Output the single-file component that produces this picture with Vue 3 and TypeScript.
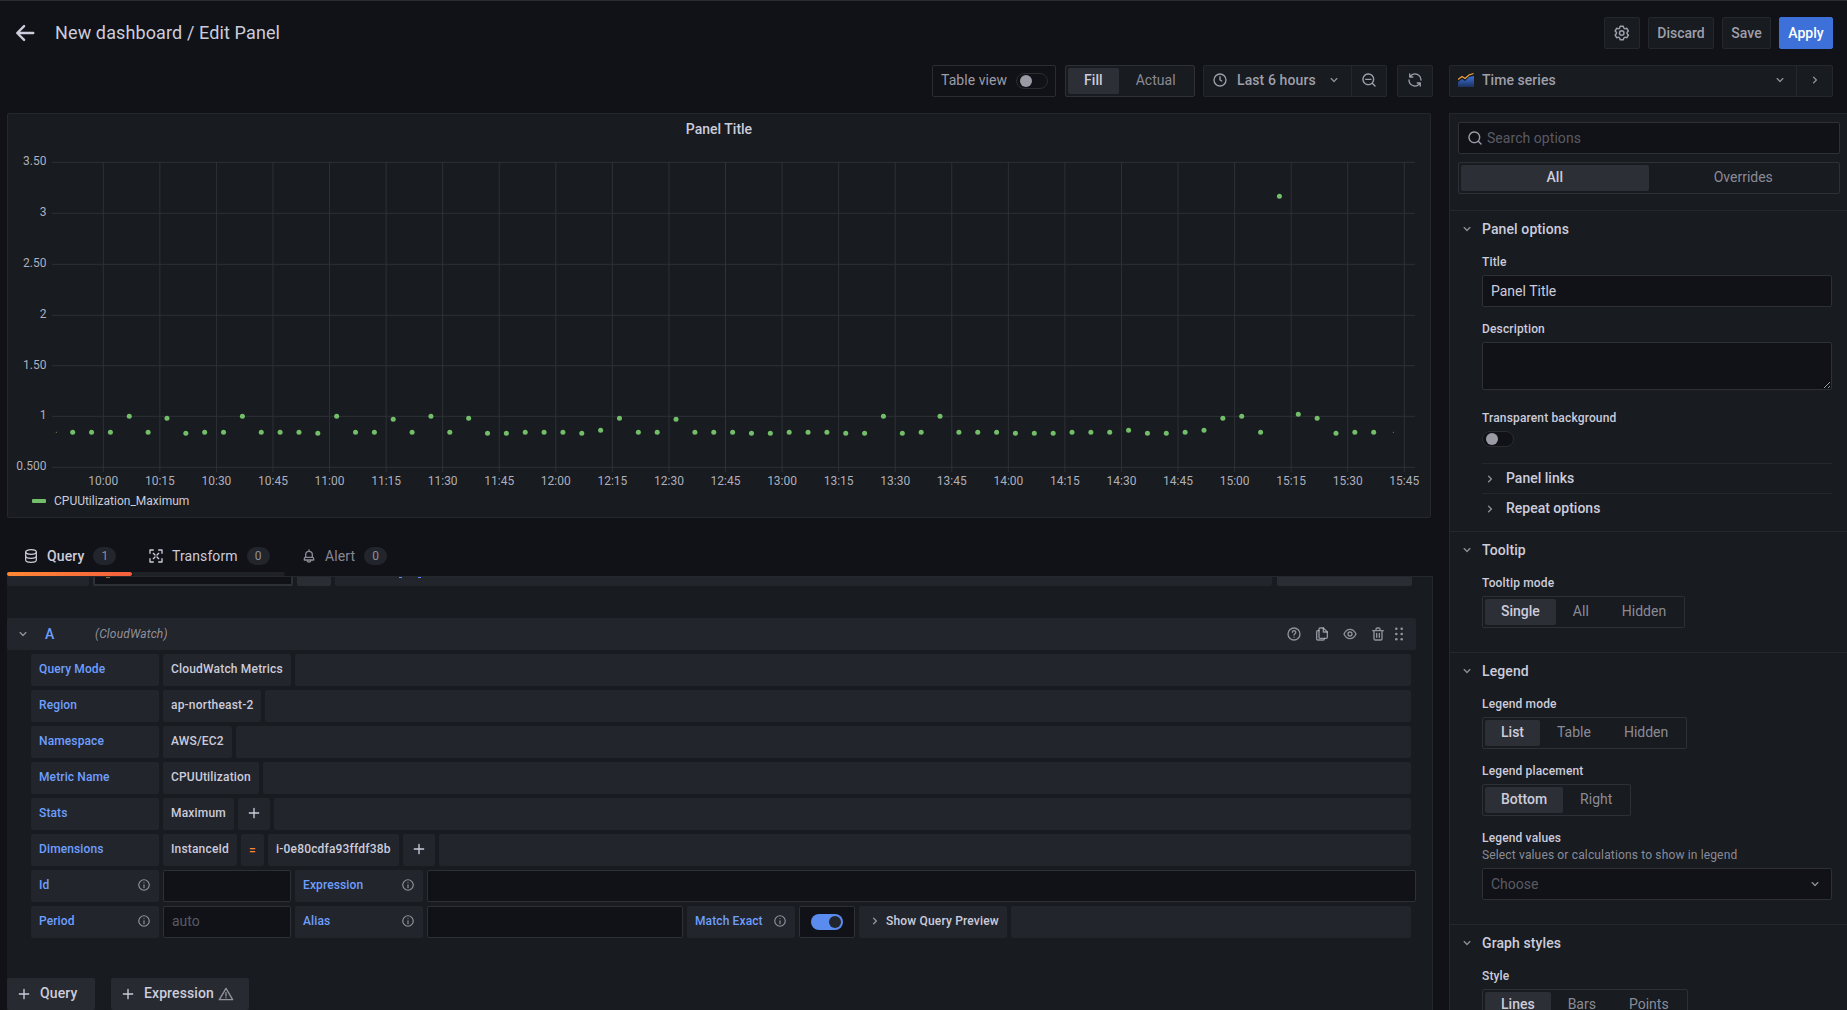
<script setup lang="ts">
const icons: Record<string, string> = {
  cog: 'M19.9,12.66a1,1,0,0,1,0-1.32L21.18,9.9a1,1,0,0,0,.12-1.17l-2-3.46a1,1,0,0,0-1.07-.48l-1.88.38a1,1,0,0,1-1.15-.66l-.61-1.83A1,1,0,0,0,13.64,2h-4a1,1,0,0,0-1,.68L8.08,4.51a1,1,0,0,1-1.15.66L5,4.79A1,1,0,0,0,4,5.27L2,8.73A1,1,0,0,0,2.1,9.9l1.27,1.44a1,1,0,0,1,0,1.32L2.1,14.1A1,1,0,0,0,2,15.27l2,3.46a1,1,0,0,0,1.07.48l1.88-.38a1,1,0,0,1,1.15.66l.61,1.83a1,1,0,0,0,1,.68h4a1,1,0,0,0,.95-.68l.61-1.83a1,1,0,0,1,1.15-.66l1.88.38a1,1,0,0,0,1.07-.48l2-3.46a1,1,0,0,0-.12-1.17ZM18.41,14l.8.9-1.28,2.22-1.18-.24a3,3,0,0,0-3.45,2L12.92,20H10.36L10,18.86a3,3,0,0,0-3.45-2l-1.18.24L4.07,14.89l.8-.9a3,3,0,0,0,0-4l-.8-.9L5.35,6.89l1.18.24a3,3,0,0,0,3.45-2L10.36,4h2.56l.38,1.14a3,3,0,0,0,3.45,2l1.18-.24,1.28,2.22-.8.9A3,3,0,0,0,18.41,14ZM11.64,8a4,4,0,1,0,4,4A4,4,0,0,0,11.64,8Zm0,6a2,2,0,1,1,2-2A2,2,0,0,1,11.64,14Z',
  clock: 'M15.09814,12.63379,13,11.42285V7a1,1,0,0,0-2,0v5a1.00025,1.00025,0,0,0,.5.86621l2.59814,1.5a1.00016,1.00016,0,1,0,1-1.73242ZM12,2A10,10,0,1,0,22,12,10.01146,10.01146,0,0,0,12,2Zm0,18a8,8,0,1,1,8-8A8.00917,8.00917,0,0,1,12,20Z',
  zoomOut: 'M21.71,20.29,18,16.61A9,9,0,1,0,16.61,18l3.68,3.68a1,1,0,0,0,1.42,0A1,1,0,0,0,21.71,20.29ZM11,18a7,7,0,1,1,7-7A7,7,0,0,1,11,18Zm4-8H7a1,1,0,0,0,0,2h8a1,1,0,0,0,0-2Z',
  search: 'M21.71,20.29,18,16.61A9,9,0,1,0,16.61,18l3.68,3.68a1,1,0,0,0,1.42,0A1,1,0,0,0,21.71,20.29ZM11,18a7,7,0,1,1,7-7A7,7,0,0,1,11,18Z',
  sync: 'M19.91,15.51H15.38a1,1,0,0,0,0,2h2.4A8,8,0,0,1,4,12a1,1,0,0,0-2,0,10,10,0,0,0,16.88,7.23V21a1,1,0,0,0,2,0V16.5A1,1,0,0,0,19.91,15.51ZM12,2A10,10,0,0,0,5.12,4.77V3a1,1,0,0,0-2,0V7.5a1,1,0,0,0,1,1h4.5a1,1,0,0,0,0-2H6.22A8,8,0,0,1,20,12a1,1,0,0,0,2,0A10,10,0,0,0,12,2Z',
  down: 'M17,9.17a1,1,0,0,0-1.41,0L12,12.71,8.46,9.17a1,1,0,0,0-1.41,0,1,1,0,0,0,0,1.42l4.24,4.24a1,1,0,0,0,1.42,0L17,10.59A1,1,0,0,0,17,9.17Z',
  right: 'M14.83,11.29,10.59,7.05a1,1,0,0,0-1.42,0,1,1,0,0,0,0,1.41L12.71,12,9.17,15.54a1,1,0,0,0,0,1.41,1,1,0,0,0,.71.29,1,1,0,0,0,.71-.29l4.24-4.24A1,1,0,0,0,14.83,11.29Z',
  bell: 'M18,13.18V10a6,6,0,0,0-5-5.91V3a1,1,0,0,0-2,0V4.09A6,6,0,0,0,6,10v3.18A3,3,0,0,0,4,16v2a1,1,0,0,0,1,1H8.14a4,4,0,0,0,7.72,0H19a1,1,0,0,0,1-1V16A3,3,0,0,0,18,13.18ZM8,10a4,4,0,0,1,8,0v3H8Zm4,10a2,2,0,0,1-1.72-1h3.44A2,2,0,0,1,12,20Zm6-3H6V16a1,1,0,0,1,1-1H17a1,1,0,0,1,1,1Z',
  plus: 'M19,11H13V5a1,1,0,0,0-2,0v6H5a1,1,0,0,0,0,2h6v6a1,1,0,0,0,2,0V13h6a1,1,0,0,0,0-2Z',
  eye: 'M21.92,11.6C19.9,6.91,16.1,4,12,4S4.1,6.91,2.08,11.6a1,1,0,0,0,0,.8C4.1,17.09,7.9,20,12,20s7.9-2.91,9.92-7.6A1,1,0,0,0,21.92,11.6ZM12,18c-3.17,0-6.17-2.29-7.9-6C5.83,8.29,8.83,6,12,6s6.17,2.29,7.9,6C18.17,15.71,15.17,18,12,18ZM12,8a4,4,0,1,0,4,4A4,4,0,0,0,12,8Zm0,6a2,2,0,1,1,2-2A2,2,0,0,1,12,14Z',
  trash: 'M10,18a1,1,0,0,0,1-1V11a1,1,0,0,0-2,0v6A1,1,0,0,0,10,18ZM20,6H16V5a3,3,0,0,0-3-3H11A3,3,0,0,0,8,5V6H4A1,1,0,0,0,4,8H5V19a3,3,0,0,0,3,3h8a3,3,0,0,0,3-3V8h1a1,1,0,0,0,0-2ZM10,5a1,1,0,0,1,1-1h2a1,1,0,0,1,1,1V6H10Zm7,14a1,1,0,0,1-1,1H8a1,1,0,0,1-1-1V8H17Zm-3-1a1,1,0,0,0,1-1V11a1,1,0,0,0-2,0v6A1,1,0,0,0,14,18Z',
}

const levels: Record<string, number> = { a: 432.3, b: 433.3, c: 430.3, T: 416.3, U: 418.3, V: 419.3, S: 414.3, H: 196.3 }
const dotCodes = 'aaaTaUbaaTaaabTaaVaTaUb' + 'baaabcUaaVaaabbaaabbTbaTaaab' + 'bbaaacbbacUTaHSUbaa'
const dots = dotCodes.split('').map((c, i) => ({ x: 72.7 + 18.855 * i, y: levels[c] }))

const yTicks = [
  { label: '3.50', y: 162.3 },
  { label: '3', y: 213.3 },
  { label: '2.50', y: 264.3 },
  { label: '2', y: 315.3 },
  { label: '1.50', y: 365.8 },
  { label: '1', y: 416.3 },
  { label: '0.500', y: 467.3 },
]
const xTicks = Array.from({ length: 24 }, (_, i) => {
  const mins = 600 + i * 15
  const h = Math.floor(mins / 60)
  const m = mins % 60
  return { x: 103.3 + 56.565 * i, label: `${h}:${m === 0 ? '00' : m}` }
})

interface Seg { t: string; kind?: 'plus' | 'op' }
const rows: { label: string; segs: Seg[] }[] = [
  { label: 'Query Mode', segs: [{ t: 'CloudWatch Metrics' }] },
  { label: 'Region', segs: [{ t: 'ap-northeast-2' }] },
  { label: 'Namespace', segs: [{ t: 'AWS/EC2' }] },
  { label: 'Metric Name', segs: [{ t: 'CPUUtilization' }] },
  { label: 'Stats', segs: [{ t: 'Maximum' }, { t: '', kind: 'plus' }] },
  { label: 'Dimensions', segs: [{ t: 'InstanceId' }, { t: '=', kind: 'op' }, { t: 'i-0e80cdfa93ffdf38b' }, { t: '', kind: 'plus' }] },
]
</script>

<template>
  <div class="app">
    <header class="topbar">
      <svg class="back" viewBox="0 0 24 24"><path d="M21 12H4M11 4.5L3.5 12l7.5 7.5" /></svg>
      <div class="title">New dashboard / Edit Panel</div>
      <div class="top-actions">
        <button class="btn icon-btn"><svg class="ic" viewBox="0 0 24 24"><path :d="icons.cog" /></svg></button>
        <button class="btn w-discard">Discard</button>
        <button class="btn w-save">Save</button>
        <button class="btn primary w-apply">Apply</button>
      </div>
    </header>

    <div class="toolbar">
      <div class="box tableview">
        <span class="lift">Table view</span>
        <span class="switch"><i class="knob"></i></span>
      </div>
      <div class="radio fillradio">
        <span class="opt on">Fill</span>
        <span class="opt">Actual</span>
      </div>
      <div class="box picker">
        <div class="range">
          <svg class="ic lift" viewBox="0 0 24 24"><path :d="icons.clock" /></svg>
          <span class="lift">Last 6 hours</span>
          <svg class="ic ic-chev lift" viewBox="0 0 24 24"><path :d="icons.down" /></svg>
        </div>
        <div class="zoom"><svg class="ic lift" viewBox="0 0 24 24"><path :d="icons.zoomOut" /></svg></div>
      </div>
      <div class="box refresh"><svg class="ic lift" viewBox="0 0 24 24"><path :d="icons.sync" /></svg></div>
      <div class="box viz">
        <div class="viz-main">
          <svg class="viz-ic lift" viewBox="0 0 16 14">
            <defs>
              <linearGradient id="vizfill" x1="0" y1="0" x2="0" y2="1">
                <stop offset="0" stop-color="#3d71d9" />
                <stop offset="1" stop-color="#1d3260" />
              </linearGradient>
            </defs>
            <path d="M0 9L4 6l3 2 4-4 5-1v11H0z" fill="url(#vizfill)" />
            <path d="M0 6.5L4 3.5l3 2 4-3.5 4.5-1.5" fill="none" stroke="#f2a43a" stroke-width="1.2" />
          </svg>
          <span class="lift">Time series</span>
          <svg class="ic ic-chev push lift" viewBox="0 0 24 24"><path :d="icons.down" /></svg>
        </div>
        <div class="viz-next"><svg class="ic lift" viewBox="0 0 24 24"><path :d="icons.right" /></svg></div>
      </div>
    </div>

    <div class="content">
      <div class="left">
        <section class="panel">
          <svg class="chart" viewBox="8 114 1422 403" width="1422" height="403">
            <text class="ptitle" x="719" y="134" text-anchor="middle">Panel Title</text>
            <line v-for="t in yTicks" :key="t.label" class="grid" x1="52" x2="1415" :y1="t.y" :y2="t.y" />
            <line v-for="t in xTicks" :key="t.label" class="grid" :x1="t.x" :x2="t.x" y1="162" y2="472" />
            <text v-for="t in yTicks" :key="'y' + t.label" class="tick" x="46.5" :y="t.y + 3" text-anchor="end">{{ t.label }}</text>
            <text v-for="t in xTicks" :key="'x' + t.label" class="tick" :x="t.x" y="484.5" text-anchor="middle">{{ t.label }}</text>
            <circle cx="56.3" cy="432.3" r="0.5" class="dot" />
            <circle v-for="(d, i) in dots" :key="i" :cx="d.x" :cy="d.y" r="2.5" class="dot" />
            <circle cx="1393.3" cy="432.3" r="0.5" class="dot" />
            <rect x="32" y="499" width="14" height="4" rx="1" class="dot" />
            <text class="legend" x="54" y="504.5">CPUUtilization_Maximum</text>
          </svg>
        </section>

        <nav class="tabs">
          <div class="tab active">
            <svg class="ic tab-ic" viewBox="0 0 24 24">
              <g class="st thin">
                <ellipse cx="12" cy="6" rx="8" ry="3.500" />
                <path d="M4 6v12c0 1.900 3.600 3.500 8 3.500s8-1.600 8-3.500V6" />
                <path d="M4 12c0 1.900 3.600 3.500 8 3.500s8-1.600 8-3.500" />
              </g>
            </svg>
            <span>Query</span><span class="badge">1</span>
          </div>
          <div class="tab second">
            <svg class="ic tab-ic" viewBox="0 0 24 24">
              <g class="st">
                <path d="M3 8V3h5M16 3h5v5M21 16v5h-5M8 21H3v-5" />
                <path d="M8 8l2.500 2.500M16 8l-2.500 2.500M16 16l-2.500-2.500M8 16l2.500-2.500" />
              </g>
            </svg>
            <span>Transform</span><span class="badge">0</span>
          </div>
          <div class="tab third">
            <svg class="ic tab-ic" viewBox="0 0 24 24"><path :d="icons.bell" /></svg>
            <span>Alert</span><span class="badge">0</span>
          </div>
        </nav>

        <div class="query">
          <div class="stub">
            <div class="s1"></div>
            <div class="s2"><i class="speck orange"></i></div>
            <div class="s3"></div>
            <div class="s4"><i class="speck blue b1"></i><i class="speck blue b2"></i></div>
            <div class="s5"></div>
          </div>

          <div class="qhead">
            <svg class="ic ic-chev" viewBox="0 0 24 24"><path :d="icons.down" /></svg>
            <span class="qa">A</span>
            <span class="qds">(CloudWatch)</span>
            <div class="qicons">
              <svg class="ic" viewBox="0 0 24 24"><g class="st"><circle cx="12" cy="12" r="9" /><path d="M9.600 9.500a2.500 2.500 0 1 1 3.800 2.100c-.9.600-1.400 1-1.400 2" /><path d="M12 16.700v.1" /></g></svg>
              <svg class="ic" viewBox="0 0 24 24"><g class="st"><path d="M9 3h5l6 6v8a1.500 1.500 0 0 1-1.500 1.500H9A1.500 1.500 0 0 1 7.500 17V4.500A1.500 1.500 0 0 1 9 3z" /><path d="M14 3v6h6" /><path d="M7.500 7H5.500A1.500 1.500 0 0 0 4 8.500v11A1.500 1.500 0 0 0 5.500 21H14a1.500 1.500 0 0 0 1.500-1.500v-1" /></g></svg>
              <svg class="ic" viewBox="0 0 24 24"><path :d="icons.eye" /></svg>
              <svg class="ic" viewBox="0 0 24 24"><path :d="icons.trash" /></svg>
              <svg class="ic grip" viewBox="0 0 16 16"><circle cx="5.300" cy="2.700" r="1.300" /><circle cx="10.700" cy="2.700" r="1.300" /><circle cx="5.300" cy="8" r="1.300" /><circle cx="10.700" cy="8" r="1.300" /><circle cx="5.300" cy="13.300" r="1.300" /><circle cx="10.700" cy="13.300" r="1.300" /></svg>
            </div>
          </div>

          <div v-for="r in rows" :key="r.label" class="qrow inset">
            <div class="qlabel"><span>{{ r.label }}</span></div>
            <template v-for="(s, i) in r.segs" :key="i">
              <div v-if="s.kind === 'plus'" class="seg plus"><svg class="ic" viewBox="0 0 24 24"><path :d="icons.plus" /></svg></div>
              <div v-else-if="s.kind === 'op'" class="seg op">{{ s.t }}</div>
              <div v-else class="seg">{{ s.t }}</div>
            </template>
            <div class="fill"></div>
          </div>

          <div class="qrow">
            <div class="qlabel"><span>Id</span><svg class="ic info" viewBox="0 0 24 24"><g class="st"><circle cx="12" cy="12" r="9" /><path d="M12 11.500v5M12 7.800v.1" /></g></svg></div>
            <div class="qinput"></div>
            <div class="qlabel"><span>Expression</span><svg class="ic info" viewBox="0 0 24 24"><g class="st"><circle cx="12" cy="12" r="9" /><path d="M12 11.500v5M12 7.800v.1" /></g></svg></div>
            <div class="qinput grow"></div>
          </div>

          <div class="qrow inset">
            <div class="qlabel"><span>Period</span><svg class="ic info" viewBox="0 0 24 24"><g class="st"><circle cx="12" cy="12" r="9" /><path d="M12 11.500v5M12 7.800v.1" /></g></svg></div>
            <div class="qinput ph">auto</div>
            <div class="qlabel"><span>Alias</span><svg class="ic info" viewBox="0 0 24 24"><g class="st"><circle cx="12" cy="12" r="9" /><path d="M12 11.500v5M12 7.800v.1" /></g></svg></div>
            <div class="qinput alias"></div>
            <div class="qlabel match"><span>Match Exact</span><svg class="ic info" viewBox="0 0 24 24"><g class="st"><circle cx="12" cy="12" r="9" /><path d="M12 11.500v5M12 7.800v.1" /></g></svg></div>
            <div class="qswitch"><span class="switch onsw"><i class="knob"></i></span></div>
            <div class="seg preview"><svg class="ic ic-chev" viewBox="0 0 24 24"><path :d="icons.right" /></svg>Show Query Preview</div>
            <div class="fill"></div>
          </div>

          <div class="adds">
            <button class="addbtn w-q"><svg class="ic" viewBox="0 0 24 24"><path :d="icons.plus" /></svg><span class="lift">Query</span></button>
            <button class="addbtn w-e">
              <svg class="ic" viewBox="0 0 24 24"><path :d="icons.plus" /></svg><span class="lift">Expression</span>
              <svg class="ic warn" viewBox="0 0 24 24"><g class="st"><path d="M12 3.500L22 20.500H2z" /><path d="M12 10v5M12 17.600v.1" /></g></svg>
            </button>
          </div>
        </div>
      </div>

      <aside class="pane">
        <div class="pane-top">
          <div class="search">
            <svg class="ic" viewBox="0 0 24 24"><path :d="icons.search" /></svg>
            <span>Search options</span>
          </div>
          <div class="radio full">
            <span class="opt on">All</span>
            <span class="opt">Overrides</span>
          </div>
        </div>

        <section class="sec">
          <div class="sec-head"><svg class="ic ic-chev" viewBox="0 0 24 24"><path :d="icons.down" /></svg>Panel options</div>
          <div class="sec-body short">
            <div class="field">
              <label class="lbl">Title</label>
              <div class="input">Panel Title</div>
            </div>
            <div class="field desc">
              <label class="lbl">Description</label>
              <textarea class="area" aria-label="Description"></textarea>
            </div>
            <div class="field sw">
              <label class="lbl">Transparent background</label>
              <span class="switch"><i class="knob"></i></span>
            </div>
            <div class="sub"><svg class="ic ic-chev" viewBox="0 0 24 24"><path :d="icons.right" /></svg><span class="lift">Panel links</span></div>
            <div class="sub"><svg class="ic ic-chev" viewBox="0 0 24 24"><path :d="icons.right" /></svg><span class="lift">Repeat options</span></div>
          </div>
        </section>

        <section class="sec">
          <div class="sec-head"><svg class="ic ic-chev" viewBox="0 0 24 24"><path :d="icons.down" /></svg>Tooltip</div>
          <div class="sec-body">
            <div class="field last">
              <label class="lbl">Tooltip mode</label>
              <div class="radio">
                <span class="opt on">Single</span><span class="opt">All</span><span class="opt">Hidden</span>
              </div>
            </div>
          </div>
        </section>

        <section class="sec">
          <div class="sec-head"><svg class="ic ic-chev" viewBox="0 0 24 24"><path :d="icons.down" /></svg>Legend</div>
          <div class="sec-body">
            <div class="field">
              <label class="lbl">Legend mode</label>
              <div class="radio">
                <span class="opt on">List</span><span class="opt">Table</span><span class="opt">Hidden</span>
              </div>
            </div>
            <div class="field">
              <label class="lbl">Legend placement</label>
              <div class="radio">
                <span class="opt on">Bottom</span><span class="opt">Right</span>
              </div>
            </div>
            <div class="field last">
              <label class="lbl nomargin">Legend values</label>
              <div class="hint">Select values or calculations to show in legend</div>
              <div class="input select"><span>Choose</span><svg class="ic ic-chev" viewBox="0 0 24 24"><path :d="icons.down" /></svg></div>
            </div>
          </div>
        </section>

        <section class="sec">
          <div class="sec-head"><svg class="ic ic-chev" viewBox="0 0 24 24"><path :d="icons.down" /></svg>Graph styles</div>
          <div class="sec-body">
            <div class="field last">
              <label class="lbl">Style</label>
              <div class="radio">
                <span class="opt on">Lines</span><span class="opt">Bars</span><span class="opt">Points</span>
              </div>
            </div>
          </div>
        </section>
      </aside>
    </div>
  </div>
</template>

<style>
html, body { margin: 0; background: #111217; overflow: hidden; }
</style>

<style scoped>
* { box-sizing: border-box; }
.app {
  width: 1847px; height: 1010px; overflow: hidden; background: #111217;
  border-top: 1px solid #2a2c31; color: #ccccdc;
  font-family: Roboto, "Liberation Sans", sans-serif; font-size: 14px;
  display: flex; flex-direction: column;
}
.ic { width: 16px; height: 16px; fill: currentColor; flex: none; display: block; }
.st { fill: none; stroke: currentColor; stroke-width: 2; stroke-linecap: round; stroke-linejoin: round; }
.thin { stroke-width: 1.800; }
.ic-chev { color: rgba(204, 204, 220, .65); }
.lift { margin-bottom: 2px; }

.topbar { height: 64px; flex: none; display: flex; align-items: flex-start; padding: 16px 14px 0 14px; }
.back { width: 22px; height: 22px; margin-top: 5px; fill: none; stroke: #ccccdc; stroke-width: 2.600; stroke-linecap: round; stroke-linejoin: round; }
.title { margin-left: 19px; font-size: 18px; line-height: 32px; letter-spacing: .12px; color: #ccccdc; }
.top-actions { margin-left: auto; display: flex; gap: 8px; }
.btn {
  height: 32px; padding: 0; background: #181b1f; border: 1px solid #24272c; border-radius: 2px;
  color: rgba(204, 204, 220, .75); font: 500 14px Roboto, sans-serif; display: flex; align-items: center; justify-content: center;
}
.icon-btn { width: 36px; }
.icon-btn .ic { width: 18px; height: 18px; }
.w-discard { width: 66px; }
.w-save { width: 49px; }
.w-apply { width: 54px; }
.primary { background: #3d71d9; border-color: #3d71d9; color: #fff; }

.toolbar { height: 32px; flex: none; display: flex; justify-content: flex-end; padding-right: 14px; letter-spacing: .05px; }
.box { display: flex; align-items: center; background: #181b1f; border: 1px solid #24272c; border-radius: 2px; height: 32px; color: rgba(204, 204, 220, .75); }
.tableview { width: 124px; padding-left: 8px; gap: 9px; background: #111217; border-color: #2a2c31; }
.switch { display: inline-flex; align-items: center; width: 32px; height: 16px; border-radius: 8px; border: 1px solid #2a2c31; background: #111217; padding-left: 3px; flex: none; }
.knob { display: block; width: 12px; height: 12px; border-radius: 50%; background: #9b9ba6; }
.radio { display: inline-flex; height: 32px; padding: 2px; border: 1px solid #2e3036; border-radius: 2px; gap: 1px; }
.opt { height: 26px; line-height: 25px; padding: 0 16px; color: rgba(204, 204, 220, .65); border-radius: 2px; text-align: center; }
.opt.on { background: #2c2f35; color: #ccccdc; font-weight: 500; }
.fillradio { width: 130px; margin-left: 9px; background: #181b1f; }
.picker { width: 184px; margin-left: 8px; }
.range { width: 148px; height: 100%; display: flex; align-items: center; padding-left: 8px; gap: 9px; font-weight: 500; border-right: 1px solid #24272c; letter-spacing: .1px; }
.range .ic-chev { margin-left: 1px; }
.zoom { flex: 1; display: flex; justify-content: center; }
.refresh { width: 36px; margin-left: 10px; justify-content: center; }
.viz { width: 384px; margin-left: 16px; }
.viz-main { flex: 1; height: 100%; display: flex; align-items: center; padding: 0 8px 0 8px; font-weight: 500; border-right: 1px solid #24272c; }
.viz-ic { width: 16px; height: 14px; margin-right: 8px; }
.push { margin-left: auto; }
.viz-next { width: 35px; display: flex; justify-content: center; color: rgba(204, 204, 220, .65); }

.content { flex: 1; min-height: 0; display: flex; margin-top: 16px; padding-left: 7px; }
.left { width: 1426px; display: flex; flex-direction: column; flex: none; }
.panel { width: 1424px; height: 405px; flex: none; background: #181b1f; border: 1px solid #24272c; border-radius: 2px; }
.chart { display: block; }
.ptitle { fill: #ccccdc; font: 500 14px Roboto, sans-serif; }
.grid { stroke: #2e3135; stroke-width: 1; }
.tick { fill: rgba(204, 204, 220, .85); font: 400 12px Roboto, sans-serif; }
.legend { fill: #ccccdc; font: 400 12px Roboto, sans-serif; }
.dot { fill: #73bf69; }

.tabs { height: 58px; flex: none; display: flex; letter-spacing: .1px; }
.tab { position: relative; height: 58px; padding: 23px 16px 5px; display: flex; align-items: center; color: #ccccdc; }
.tab.active { font-weight: 500; width: 125px; }
.tab.second { width: 153px; }
.tab.third { color: rgba(204, 204, 220, .65); }
.tab-ic { margin-right: 8px; }
.badge { width: 23px; height: 18px; line-height: 18px; margin-left: 9px; border-radius: 9px; background: #22252b; text-align: center; font-size: 12px; font-weight: 400; color: rgba(204, 204, 220, .65); flex: none; }
.tab.active::after, .tab.second::after { content: ""; position: absolute; left: 0; right: 0; bottom: 0; height: 4px; border-radius: 2px; }
.tab.active::after { background: linear-gradient(90deg, #ff8833, #f55f3e); }
.tab.second::after { background: #1e2126; }

.query { flex: 1; min-height: 0; overflow: hidden; background: #181b1f; border-top: 1px solid #24272c; border-right: 1px solid #24272c; padding-right: 16px; }
.stub { display: flex; height: 9px; gap: 4px; margin-bottom: 32px; }
.stub > div { height: 9px; border-radius: 0 0 2px 2px; position: relative; }
.s1 { width: 82px; background: #22252b; }
.s2 { width: 200px; background: #111217; border: 2px solid #2e3036; border-top: 0; }
.s3 { width: 34px; background: #2a2d33; }
.s4 { width: 937px; background: #22252b; }
.s5 { width: 135px; margin-left: 1px; background: #2a2d33; }
.speck { position: absolute; top: 0; height: 1px; }
.orange { left: 11px; width: 4px; background: #a4682a; }
.blue { background: #5a8cff; width: 3px; }
.b1 { left: 64px; }
.b2 { left: 83px; }

.qhead { height: 32px; background: #22252b; border-radius: 2px; display: flex; align-items: center; padding-left: 8px; }
.qa { width: 50px; margin-left: 14px; color: #6e9fff; font-weight: 500; }
.qds { font-size: 12px; font-style: italic; letter-spacing: .15px; color: rgba(204, 204, 220, .65); }
.qicons { margin-left: auto; display: flex; gap: 12px; color: rgba(204, 204, 220, .65); padding-right: 9px; }
.grip { margin-left: -7px; }

.qrow { display: flex; gap: 4px; margin-top: 4px; margin-left: 24px; height: 32px; }
.inset { margin-right: 5px; }
.qlabel { width: 128px; flex: none; background: #22252b; border-radius: 2px; display: flex; align-items: center; justify-content: space-between; padding: 0 8px 2px; color: #6e9fff; font-size: 12px; font-weight: 500; letter-spacing: .12px; }
.info { color: rgba(204, 204, 220, .65); width: 14px; height: 14px; }
.seg { background: #22252b; border-radius: 2px; padding: 0 8px 2px; display: flex; align-items: center; font-size: 12px; font-weight: 500; letter-spacing: .18px; color: #ccccdc; white-space: nowrap; flex: none; }
.plus { width: 32px; padding: 0 0 2px; justify-content: center; }
.op { width: 23px; padding: 0 0 1px; justify-content: center; color: #ff8833; }
.fill { flex: 1; background: #22252b; border-radius: 2px; }
.qinput { width: 128px; flex: none; background: #111217; border: 1px solid #2e3036; border-radius: 2px; padding-left: 8px; font-size: 14px; line-height: 28px; }
.grow { flex: 1; }
.ph { color: rgba(204, 204, 220, .4); }
.alias { width: 256px; }
.match { width: 108px; }
.qswitch { width: 56px; flex: none; background: #111217; border: 1px solid #2e3036; border-radius: 2px; display: flex; align-items: center; justify-content: center; }
.onsw { background: #5a8cf0; border: 0; justify-content: flex-end; padding: 0 2px 0 0; }
.onsw .knob { background: #22252b; }
.preview { width: 148px; padding: 0 0 2px 8px; }
.preview .ic { margin-right: 3px; }

.adds { display: flex; gap: 16px; margin-top: 40px; }
.addbtn { height: 32px; border: 0; border-radius: 2px; background: #272a30; color: #ccccdc; font: 500 14px Roboto, sans-serif; letter-spacing: .1px; display: flex; align-items: center; padding: 0 0 0 9px; gap: 8px; }
.w-q { width: 88px; }
.w-e { width: 138px; }
.warn { color: rgba(204, 204, 220, .65); margin-left: -4px; }

.pane { width: 398px; flex: none; margin-left: 16px; background: #181b1f; border: 1px solid #24272c; border-right: 0; border-bottom: 0; height: 100%; overflow: hidden; }
.pane-top { height: 96px; padding: 8px 7px 0 8px; }
.search { height: 32px; background: #111217; border: 1px solid #2e3036; border-radius: 2px; display: flex; align-items: center; padding-left: 8px; gap: 4px; color: rgba(204, 204, 220, .4); letter-spacing: .05px; }
.search .ic { color: rgba(204, 204, 220, .75); }
.full { display: flex; width: 100%; margin-top: 8px; height: 32px; }
.full .opt { flex: 1; padding: 0; }
.sec { border-top: 1px solid #24272c; }
.sec-head { height: 36px; display: flex; align-items: center; padding-left: 9px; gap: 7px; font-weight: 500; letter-spacing: .1px; color: #ccccdc; }
.sec-body { padding: 6px 15px 24px 32px; }
.sec-body.short { padding-bottom: 8px; }
.field { margin-bottom: 13px; }
.field.desc { margin-bottom: 19px; }
.field.sw { margin-bottom: 16px; }
.field.last { margin-bottom: 0; }
.lbl { display: block; height: 18px; line-height: 19px; margin-bottom: 4px; font-size: 12px; font-weight: 500; letter-spacing: .15px; color: #ccccdc; }
.lbl.nomargin { margin-bottom: 0; }
.input { height: 32px; background: #111217; border: 1px solid #2e3036; border-radius: 2px; line-height: 30px; padding-left: 8px; color: #ccccdc; }
.area { display: block; width: 100%; height: 48px; background: #111217; border: 1px solid #2e3036; border-radius: 2px; resize: both; outline: 0; }
.field .switch { display: flex; }
.sub { height: 30px; border-top: 1px solid #24272c; display: flex; align-items: center; padding-left: 0; gap: 8px; font-weight: 500; color: #ccccdc; }
.hint { height: 16px; line-height: 16px; margin-bottom: 5px; font-size: 12px; letter-spacing: .15px; color: rgba(204, 204, 220, .65); }
.select { display: flex; align-items: center; justify-content: space-between; padding-right: 8px; color: rgba(204, 204, 220, .4); line-height: 28px; }
</style>
